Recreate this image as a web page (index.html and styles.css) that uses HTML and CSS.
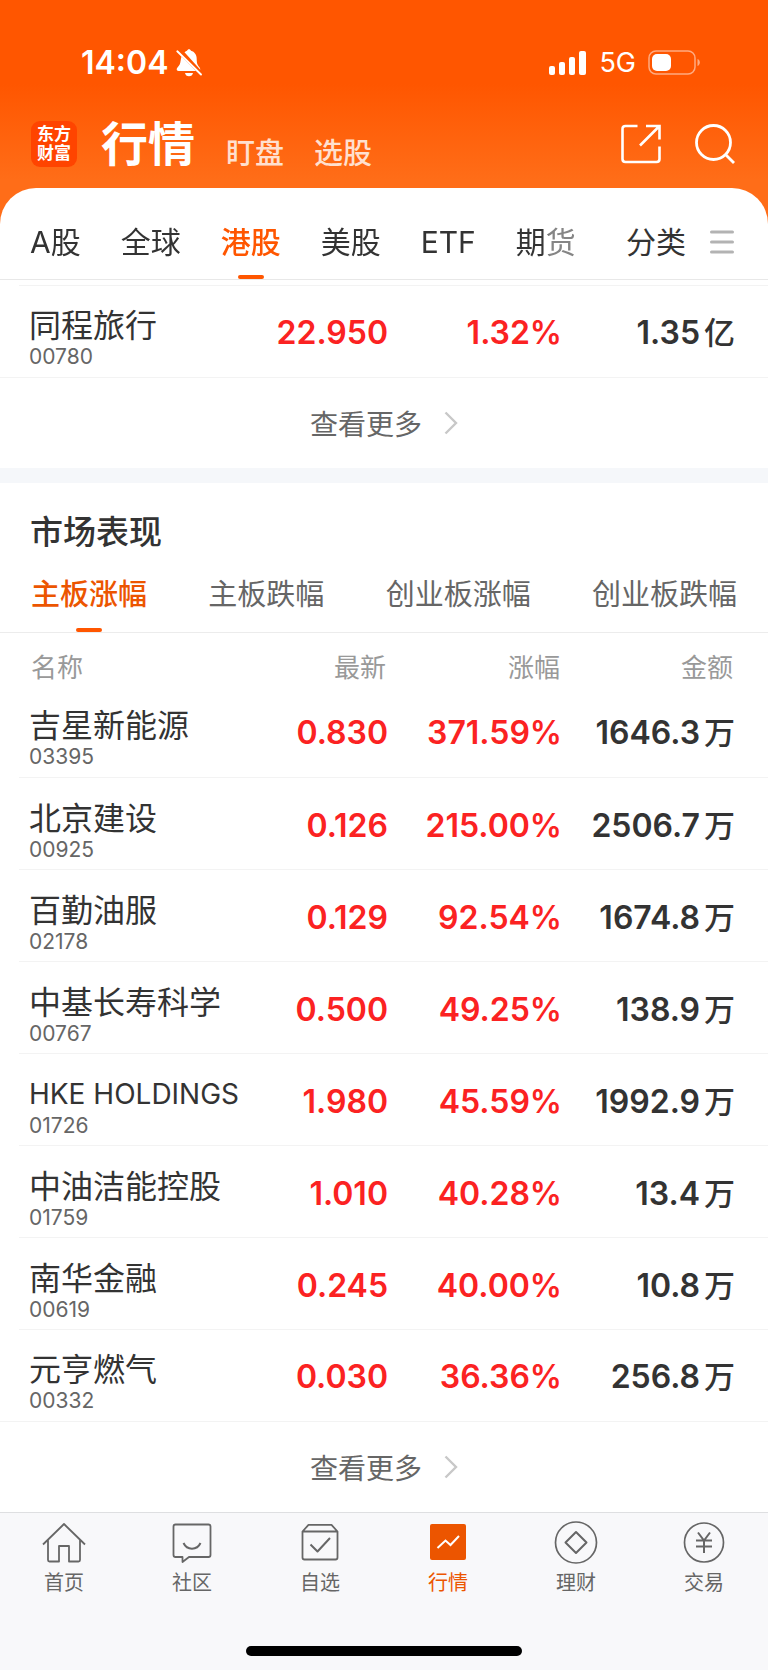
FILE: index.html
```html
<!DOCTYPE html>
<html lang="zh-CN">
<head>
<meta charset="utf-8">
<meta name="viewport" content="width=device-width, initial-scale=1">
<title>行情</title>
<link rel="stylesheet" href="styles.css">
</head>
<body>
<div class="app">
  <div class="status">
    <div class="status-side">
      <span class="time">14:04</span>
      <svg class="bell" viewBox="0 0 26 28" width="26" height="28" aria-hidden="true">
        <path fill="#fff" d="M8.500 3.200C9.600 2.400 10.400 2 11 1.800 11.400.7 12.100.2 13 .2s1.700.5 2 1.600c3.600 1 5.700 4 5.700 8 0 4.500.7 6 2.300 8 .9 1.100 1.300 2 1.300 3L8.500 3.200Z"/>
        <path fill="#fff" d="M5.500 7.500 20 22H2.600C1.300 22 .7 21.200.7 20.300c0-1.500 1.700-2.800 3-4.900 1-1.900.9-4.900 1.800-7.900ZM9 24h8c-.3 2-1.900 3.300-4 3.300S9.300 26 9 24Z"/>
        <path stroke="#fff" stroke-width="1.900" stroke-linecap="round" d="m1.300 2.300 23.700 23.200"/>
      </svg>
    </div>
    <div class="status-side">
      <svg viewBox="0 0 38 24" width="38" height="24" fill="#fff" aria-hidden="true">
        <rect x="0" y="15" width="6" height="9" rx="2"/><rect x="10" y="11" width="6" height="13" rx="2"/><rect x="20" y="6" width="6" height="18" rx="2"/><rect x="30" y="0" width="7" height="24" rx="2"/>
      </svg>
      <span class="network">5G</span>
      <svg viewBox="0 0 52 26" width="52" height="26" aria-hidden="true">
        <rect x="1" y="1" width="46" height="23" rx="7" fill="none" stroke="#ffab80" stroke-width="1.500"/>
        <rect x="4" y="4" width="19" height="17" rx="5" fill="#fff"/>
        <path d="M49.500 9v7c1.500-.6 2.300-1.900 2.300-3.500S51 9.600 49.500 9Z" fill="#ffab80"/>
      </svg>
    </div>
  </div>

  <header class="topbar">
    <div class="logo"><span>东方</span><span>财富</span></div>
    <h1 class="page-title">行情</h1>
    <a class="top-link" href="#">盯盘</a>
    <a class="top-link" href="#">选股</a>
    <div class="actions">
      <button class="icon-button" type="button" aria-label="分享">
        <svg viewBox="0 0 40 40" width="40" height="40" fill="none" stroke="#fff" stroke-width="2.600">
          <path d="M16.500 2H4.500Q1.500 2 1.500 5V35Q1.500 38 4.500 38H35.500Q38.500 38 38.500 35V22.500M25 2h13.500v13.500M38 2.500 19 21.500"/>
        </svg>
      </button>
      <button class="icon-button" type="button" aria-label="搜索">
        <svg viewBox="0 0 40 40" width="40" height="40" fill="none" stroke="#fff" stroke-width="2.800">
          <circle cx="18.500" cy="18.500" r="17"/><path d="m30.500 30.500 8.500 8.500"/>
        </svg>
      </button>
    </div>
  </header>

  <main class="sheet">
    <nav class="markets">
      <div class="market-list">
        <a href="#">A股</a><a href="#">全球</a><a class="active" href="#">港股</a><a href="#">美股</a><a href="#">ETF</a><a href="#">期货</a>
      </div>
      <button class="category" type="button">分类
        <svg viewBox="0 0 24 24" width="24" height="24" stroke="#b3b3b3" stroke-width="3" stroke-linecap="round" aria-hidden="true"><path d="M1.500 2h21M1.500 12h21M1.500 22h21"/></svg>
      </button>
    </nav>

    <section class="leading">
      <table class="quotes">
        <colgroup><col><col class="col-price"><col class="col-rate"><col class="col-amount"></colgroup>
        <tbody>
          <tr><td><span class="name">同程旅行</span><span class="code">00780</span></td><td class="up">22.950</td><td class="up">1.32%</td><td>1.35<span class="unit">亿</span></td></tr>
        </tbody>
      </table>
      <a class="more" href="#">查看更多
        <svg viewBox="0 0 14 24" width="14" height="24" fill="none" stroke="#c8c8c8" stroke-width="2.400" aria-hidden="true"><path d="m1.500 1.500 10.500 10.500L1.500 22.500"/></svg>
      </a>
    </section>

    <section class="performance">
      <h2 class="section-title">市场表现</h2>
      <nav class="boards">
        <a class="active" href="#">主板涨幅</a><a href="#">主板跌幅</a><a href="#">创业板涨幅</a><a href="#">创业板跌幅</a>
      </nav>
      <table class="quotes">
        <colgroup><col><col class="col-price"><col class="col-rate"><col class="col-amount"></colgroup>
        <thead><tr><th>名称</th><th>最新</th><th>涨幅</th><th>金额</th></tr></thead>
        <tbody>
          <tr><td><span class="name">吉星新能源</span><span class="code">03395</span></td><td class="up">0.830</td><td class="up">371.59%</td><td>1646.3<span class="unit">万</span></td></tr>
          <tr><td><span class="name">北京建设</span><span class="code">00925</span></td><td class="up">0.126</td><td class="up">215.00%</td><td>2506.7<span class="unit">万</span></td></tr>
          <tr><td><span class="name">百勤油服</span><span class="code">02178</span></td><td class="up">0.129</td><td class="up">92.54%</td><td>1674.8<span class="unit">万</span></td></tr>
          <tr><td><span class="name">中基长寿科学</span><span class="code">00767</span></td><td class="up">0.500</td><td class="up">49.25%</td><td>138.9<span class="unit">万</span></td></tr>
          <tr><td><span class="name latin">HKE HOLDINGS</span><span class="code">01726</span></td><td class="up">1.980</td><td class="up">45.59%</td><td>1992.9<span class="unit">万</span></td></tr>
          <tr><td><span class="name">中油洁能控股</span><span class="code">01759</span></td><td class="up">1.010</td><td class="up">40.28%</td><td>13.4<span class="unit">万</span></td></tr>
          <tr><td><span class="name">南华金融</span><span class="code">00619</span></td><td class="up">0.245</td><td class="up">40.00%</td><td>10.8<span class="unit">万</span></td></tr>
          <tr><td><span class="name">元亨燃气</span><span class="code">00332</span></td><td class="up">0.030</td><td class="up">36.36%</td><td>256.8<span class="unit">万</span></td></tr>
        </tbody>
      </table>
      <a class="more" href="#">查看更多
        <svg viewBox="0 0 14 24" width="14" height="24" fill="none" stroke="#c8c8c8" stroke-width="2.400" aria-hidden="true"><path d="m1.500 1.500 10.500 10.500L1.500 22.500"/></svg>
      </a>
    </section>
  </main>

  <footer class="footer">
    <nav class="tabbar">
      <a href="#">
        <svg viewBox="0 0 44 44" fill="none" stroke="currentColor" stroke-width="1.800" stroke-linejoin="round"><path d="M1 23.500 22 3l21 20.500M6 19v20q0 1.500 1.500 1.500H17V25h10v15.500h9.500q1.500 0 1.500-1.500V19"/></svg>
        首页</a>
      <a href="#">
        <svg viewBox="0 0 44 44" fill="none" stroke="currentColor" stroke-width="1.800" stroke-linejoin="round"><path d="M5.500 3.500h33Q40.500 3.500 40.500 5.500v28.500q0 2-2 2H19l-6.500 5V36H5.500q-2 0-2-2V5.500q0-2 2-2Z"/><path d="M13.500 22c3.500 7.500 13.500 7.500 17 0" stroke-width="2"/></svg>
        社区</a>
      <a href="#">
        <svg viewBox="0 0 44 44" fill="none" stroke="currentColor" stroke-width="1.800" stroke-linejoin="round"><path d="M4.500 10.500V36.500Q4.500 38.500 6.500 38.500H37.500Q39.500 38.500 39.500 36.500V10.500M4.500 10.500h35L33.500 3.800H10.500Z"/><path d="m12.500 23.500 7 7L32 17" stroke-width="2"/></svg>
        自选</a>
      <a class="active" href="#">
        <svg viewBox="0 0 44 44" fill="none"><rect x="4" y="3" width="36" height="36" rx="2" fill="#ec5500"/><path d="m11.500 27 8-7.500 5 4.500 8.500-9" stroke="#fff" stroke-width="2"/></svg>
        行情</a>
      <a href="#">
        <svg viewBox="0 0 44 44" fill="none" stroke="currentColor" stroke-width="1.700" stroke-linejoin="round"><circle cx="22" cy="21.500" r="20.500"/><path d="M22 11 32.500 21.500 22 32 11.500 21.500Z" stroke-width="2"/></svg>
        理财</a>
      <a href="#">
        <svg viewBox="0 0 44 44" fill="none" stroke="currentColor" stroke-width="1.700"><circle cx="22" cy="21.500" r="19.500"/><path d="m16 11.500 6 8 6-8M22 19.500V32M14 19.500h16M14 25.500h16" stroke-width="2"/></svg>
        交易</a>
    </nav>
    <div class="home-indicator"></div>
  </footer>
</div>
</body>
</html>
```
FILE: styles.css
```css
* { box-sizing: border-box; }
body {
  margin: 0;
  background: #fff;
  color: #333;
  font-family: Inter, "Noto Sans CJK SC", sans-serif;
}
a { color: inherit; text-decoration: none; }
button { border: 0; padding: 0; background: none; color: inherit; font: inherit; }
svg { display: block; flex: none; }
.app { background: linear-gradient(#ff5600 84px, #ff6d18 180px, #ff6d18 240px, #fff 240px); }

.status {
  display: flex;
  justify-content: space-between;
  height: 104px;
  padding: 21px 68px 0 81px;
}
.status-side { display: flex; align-items: center; gap: 12px; color: #fff; }
.status-side:first-child { gap: 8px; }
.time { font-size: 32px; font-weight: 600; }
.network { font-size: 27px; font-weight: 400; }

.topbar {
  display: flex;
  align-items: center;
  height: 84px;
  padding: 0 33px 4px 31px;
  color: #fff;
}
.logo {
  display: flex;
  flex-direction: column;
  justify-content: center;
  width: 46px;
  height: 46px;
  margin-right: 24px;
  border-radius: 9px;
  background: #ff4400;
  font-size: 17px;
  font-weight: 700;
  line-height: 19px;
  text-align: center;
}
.page-title { margin: 0 31px 0 0; font-size: 47px; line-height: 60px; font-weight: 700; }
.top-link {
  margin: 20px 30px 0 0;
  color: #ffe0cf;
  font-size: 29px;
  font-weight: 500;
  line-height: 36px;
}
.actions { display: flex; gap: 34px; margin-left: auto; }

.sheet { border-radius: 36px 36px 0 0; background: #fff; overflow: hidden; }
.markets {
  display: flex;
  justify-content: space-between;
  height: 92px;
  padding: 0 34px 0 30px;
  border-bottom: 1px solid #e8e8e8;
  font-size: 30px;
  line-height: 44px;
}
.market-list {
  display: flex;
  gap: 40px;
  padding-top: 32px;
  mask-image: linear-gradient(to left, rgb(0 0 0 / 60%) 26px, #000 34px);
}
.market-list a, .boards a { position: relative; white-space: nowrap; }
.market-list .active { color: #ff5600; font-weight: 500; }
.active::after {
  position: absolute;
  bottom: 0;
  left: 50%;
  width: 26px;
  height: 4px;
  margin-left: -13px;
  border-radius: 2px;
  background: #ff5600;
}
.market-list .active::after, .boards .active::after { content: ""; }
.category { display: flex; align-items: center; gap: 24px; height: 44px; margin-top: 32px; }

.leading { border-bottom: 15px solid #f5f7fa; }
.leading .quotes { margin-top: 5px; border-top: 1px solid #f3f3f3; }
.quotes {
  width: calc(100% - 19px);
  margin-left: 19px;
  table-layout: fixed;
  border-collapse: collapse;
}
.col-price { width: 180px; }
.col-rate { width: 174px; }
.col-amount { width: 206px; }
.quotes td {
  height: 92px;
  padding: 4px 0 0;
  border-bottom: 1px solid #f3f3f3;
  font-size: 32px;
  font-weight: 600;
  line-height: 40px;
  text-align: right;
  white-space: nowrap;
}
.quotes tbody tr:last-child td { height: 91px; border-bottom: 0; }
.quotes th {
  height: 53px;
  padding: 16px 2px 0 0;
  color: #999;
  font-size: 26px;
  font-weight: 400;
  line-height: 37px;
  text-align: right;
}
.quotes td:first-child { padding: 15px 0 0 10px; font-weight: 400; text-align: left; }
.quotes th:first-child { padding-left: 12px; text-align: left; }
.quotes td:last-child { padding-right: 33px; }
.quotes th:last-child { padding-right: 35px; }
.quotes .up { color: #fb2222; }
.name, .code { display: block; }
.name { height: 37px; line-height: 37px; }
.latin { font-size: 28px; }
.code { color: #666; font-size: 21px; line-height: 26px; }
.unit { margin-left: 4px; font-size: 31px; font-weight: 500; }
.more {
  display: flex;
  align-items: center;
  justify-content: center;
  gap: 22px;
  height: 91px;
  border-top: 1px solid #f3f3f3;
  color: #666;
  font-size: 28px;
}

.section-title { margin: 0; padding: 24px 30px 0; font-size: 33px; font-weight: 500; line-height: 50px; }
.boards {
  display: flex;
  justify-content: space-between;
  height: 76px;
  padding: 0 31px;
  border-bottom: 1px solid #ececec;
  color: #666;
  font-size: 29px;
  line-height: 76px;
}
.boards .active { color: #ec5500; font-weight: 500; }

.footer { padding-bottom: 15px; border-top: 1px solid #dedfe1; background: #f8f8fa; }
.tabbar { display: grid; grid-template-columns: repeat(6, 1fr); padding-top: 8px; }
.tabbar a {
  display: flex;
  flex-direction: column;
  align-items: center;
  color: #666;
  font-size: 20px;
  line-height: 36px;
}
.tabbar svg { width: 44px; height: 44px; }
.tabbar .active { color: #ec5500; }
.home-indicator {
  width: 36%;
  height: 10px;
  margin: 45px auto 0;
  border-radius: 5px;
  background: #000;
}
```
